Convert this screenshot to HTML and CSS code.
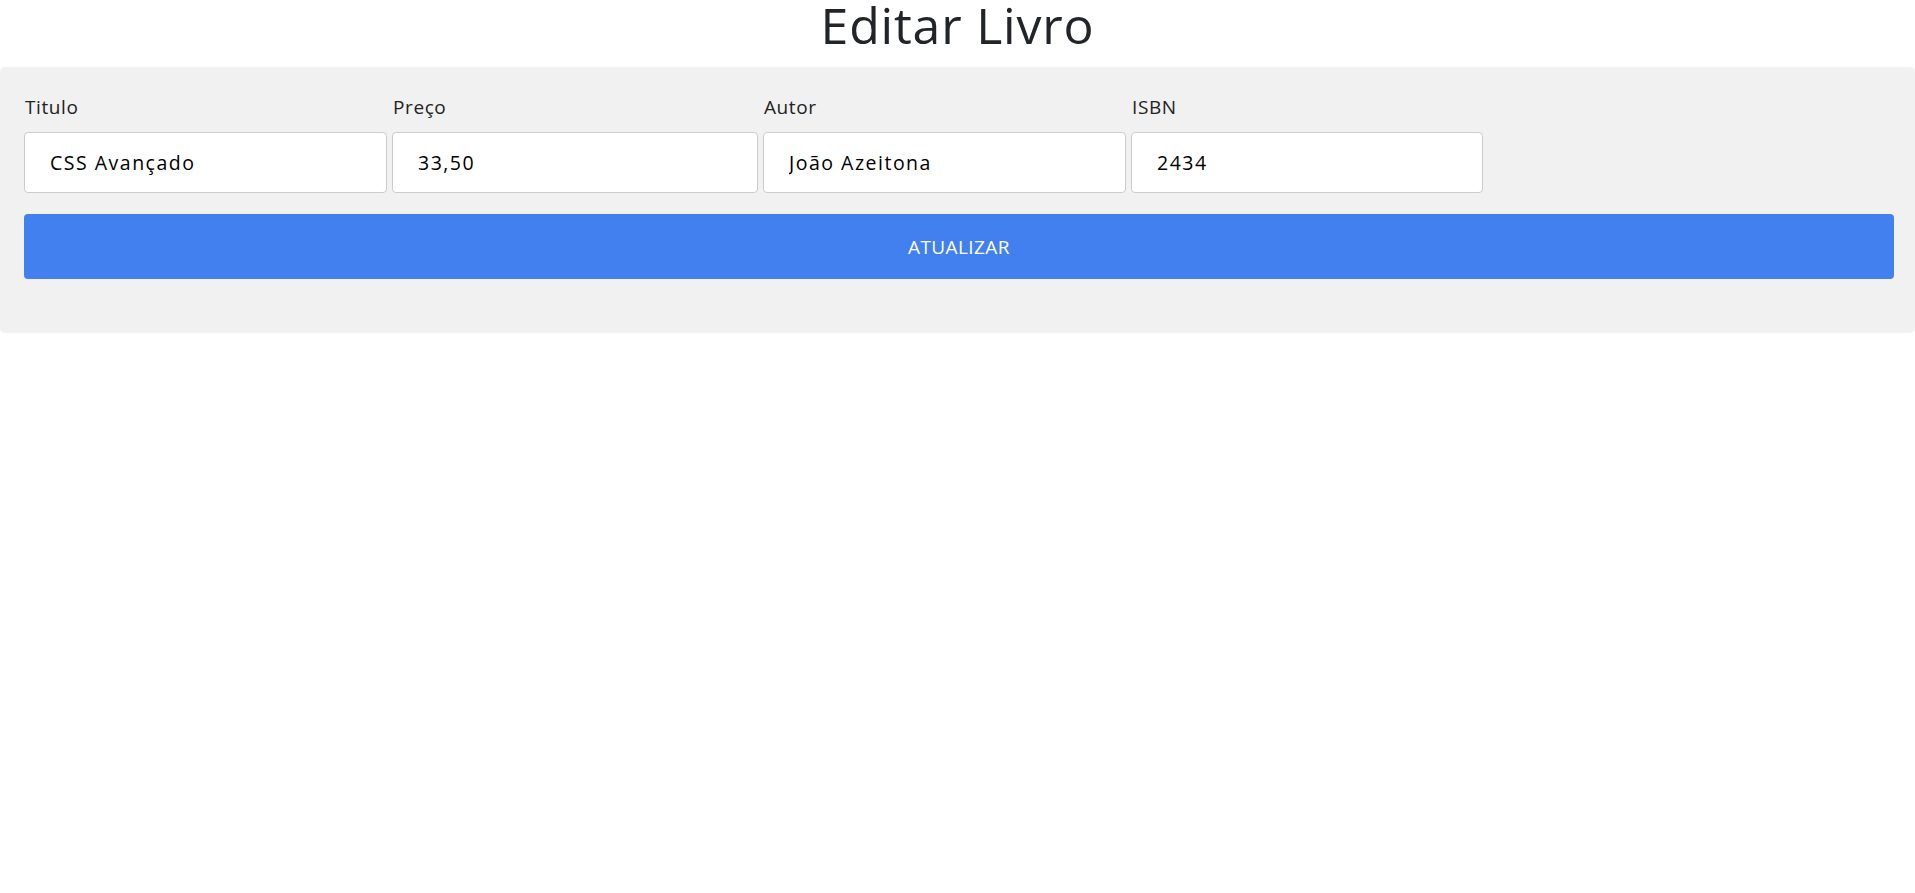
FILE: index.html
```html
<!DOCTYPE html>
<html lang="pt">
<head>
<meta charset="utf-8">
<title>Editar Livro</title>
<link rel="stylesheet" href="styles.css">
</head>
<body>
<h1 class="title">Editar Livro</h1>
<form class="panel">
  <div class="fields">
    <div class="field">
      <label class="label" for="titulo">Titulo</label>
      <input class="input" id="titulo" type="text" value="CSS Avançado">
    </div>
    <div class="field">
      <label class="label" for="preco">Preço</label>
      <input class="input" id="preco" type="text" value="33,50">
    </div>
    <div class="field">
      <label class="label" for="autor">Autor</label>
      <input class="input" id="autor" type="text" value="João Azeitona">
    </div>
    <div class="field">
      <label class="label" for="isbn">ISBN</label>
      <input class="input" id="isbn" type="text" value="2434">
    </div>
  </div>
  <button class="btn" type="button">Atualizar</button>
</form>
</body>
</html>
```
FILE: styles.css
```css
* { box-sizing: border-box; }
body {
  margin: 0;
  background: #ffffff;
  font-family: "Open Sans", "Liberation Sans", sans-serif;
  color: #212529;
}
.title {
  margin: 0 0 17px;
  line-height: 50px;
  font-size: 50px;
  font-weight: 400;
  letter-spacing: 0.8px;
  text-align: center;
  color: #212529;
}
.panel {
  background: #f1f1f1;
  border-radius: 5px;
  padding: 28px 21px 54px 24px;
}
.fields {
  display: grid;
  grid-template-columns: 363px 366px 363px 352px;
  column-gap: 5px;
}
.field {
  display: flex;
  flex-direction: column;
}
.label {
  display: block;
  font-size: 19px;
  line-height: 24px;
  letter-spacing: 0.6px;
  color: #222222;
  padding-left: 1px;
  margin-bottom: 13px;
}
.input {
  width: 100%;
  height: 61px;
  border: 1px solid #cccccc;
  border-radius: 4px;
  background: #ffffff;
  padding: 0 25px;
  font-family: inherit;
  font-size: 19.5px;
  letter-spacing: 1.5px;
  color: #000000;
}
.btn {
  display: block;
  width: 100%;
  height: 65px;
  margin-top: 21px;
  border: none;
  border-radius: 4px;
  background: #4280f0;
  color: #ffffff;
  font-family: inherit;
  font-size: 19px;
  letter-spacing: 0.4px;
  text-transform: uppercase;
}
```
